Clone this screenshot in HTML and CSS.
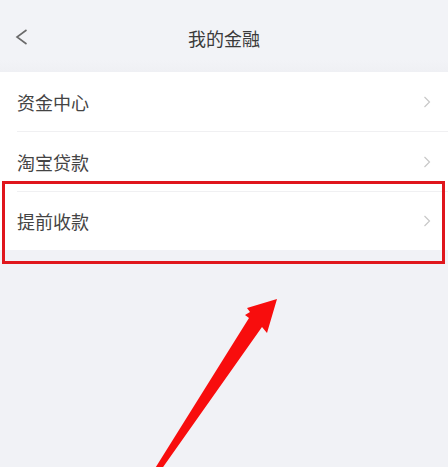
FILE: index.html
```html
<!DOCTYPE html>
<html lang="zh-CN">
<head>
<meta charset="utf-8">
<title>我的金融</title>
<link rel="stylesheet" href="styles.css">
</head>
<body>
<div class="page">
  <header class="nav">
    <svg class="back" width="13" height="16" viewBox="0 0 13 16"><path d="M11.5 1 L2 8 L11.5 15" fill="none" stroke="#6a6a6a" stroke-width="1.6"/></svg>
    <div class="title">我的金融</div>
  </header>
  <ul class="list">
    <li class="row"><span>资金中心</span><svg class="chev" width="8" height="12" viewBox="0 0 8 12"><path d="M1.5 1 L6.5 6 L1.5 11" fill="none" stroke="#c8c8c8" stroke-width="1.2"/></svg></li>
    <li class="row"><span>淘宝贷款</span><svg class="chev" width="8" height="12" viewBox="0 0 8 12"><path d="M1.5 1 L6.5 6 L1.5 11" fill="none" stroke="#c8c8c8" stroke-width="1.2"/></svg></li>
    <li class="row"><span>提前收款</span><svg class="chev" width="8" height="12" viewBox="0 0 8 12"><path d="M1.5 1 L6.5 6 L1.5 11" fill="none" stroke="#c8c8c8" stroke-width="1.2"/></svg></li>
  </ul>
  <div class="highlight"></div>
  <svg class="arrow" width="448" height="467" viewBox="0 0 448 467"><polygon points="277,299 247,308 250,312 245,315 249,318 154,470 161,470 262,327 267,333" fill="#f80d0d"/></svg>
</div>
</body>
</html>
```

FILE: styles.css
```css
* { box-sizing: border-box; }
html, body { margin: 0; padding: 0; }
body {
  background: #f1f2f6;
  font-family: "Noto Sans CJK SC", "Noto Sans", sans-serif;
  color: #333;
}
.page {
  position: relative;
  width: 448px;
  height: 467px;
  overflow: hidden;
}
.nav {
  height: 72px;
  display: flex;
  align-items: center;
  justify-content: center;
  position: relative;
  background: linear-gradient(#f2f3f7 0, #f2f3f7 60px, #eff0f4 72px);
}
.back {
  position: absolute;
  left: 15px;
  top: 29px;
}
.title {
  font-size: 18px;
  color: #3a3a3a;
  margin-top: 4px;
}
.list {
  list-style: none;
  margin: 0;
  padding: 0 0 0 17px;
  background: #fff;
}
.row {
  height: 60px;
  display: flex;
  align-items: center;
  justify-content: space-between;
  padding-right: 17px;
  font-size: 18px;
  color: #444;
  border-bottom: 1px solid #f0f0f2;
}
.row:last-child { border-bottom: none; height: 58px; }
.highlight {
  position: absolute;
  left: 2px;
  top: 181px;
  width: 443px;
  height: 83px;
  border: 3px solid #e0161c;
}
.arrow {
  position: absolute;
  left: 0;
  top: 0;
}
```
